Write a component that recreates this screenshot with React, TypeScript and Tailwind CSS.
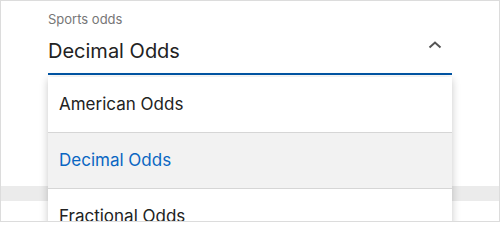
import React from "react";

const options = [
  { label: "American Odds", selected: false },
  { label: "Decimal Odds", selected: true },
  { label: "Fractional Odds", selected: false },
];

const App: React.FC = () => {
  return (
    <div
      className="relative w-[500px] h-[222px] overflow-hidden border border-[#dcdcdc] bg-white"
      style={{ fontFamily: "Inter, 'Noto Sans', sans-serif" }}
    >
      <div className="px-[47px] pt-[10px]">
        <div className="text-[13px] leading-[16px] text-[#767676]">Sports odds</div>
        <div className="flex items-center justify-between h-[48px] border-b-2 border-[#0055a5]">
          <span className="text-[20px] text-[#222222] pt-[2px]">Decimal Odds</span>
          <svg width="14" height="10" viewBox="0 0 14 10" className="mr-[10px] mb-[10px]">
            <polyline points="1.5,7.5 7,2.5 12.5,7.5" fill="none" stroke="#555555" strokeWidth="2" />
          </svg>
        </div>
      </div>
      <div className="mt-[111px] h-[15px] bg-[#ebebeb]" />

      <div className="absolute left-[47px] top-[76px] w-[404px] bg-white shadow-[0_2px_8px_rgba(0,0,0,0.22)]">
        {options.map((o) => (
          <div
            key={o.label}
            className={`flex items-center h-[56px] pl-[11px] border-b border-[#d6d6d6] text-[17px] ${
              o.selected ? "bg-[#f2f2f2] text-[#0a66c2]" : "text-[#222222]"
            }`}
          >
            {o.label}
          </div>
        ))}
      </div>
    </div>
  );
};

export default App;
